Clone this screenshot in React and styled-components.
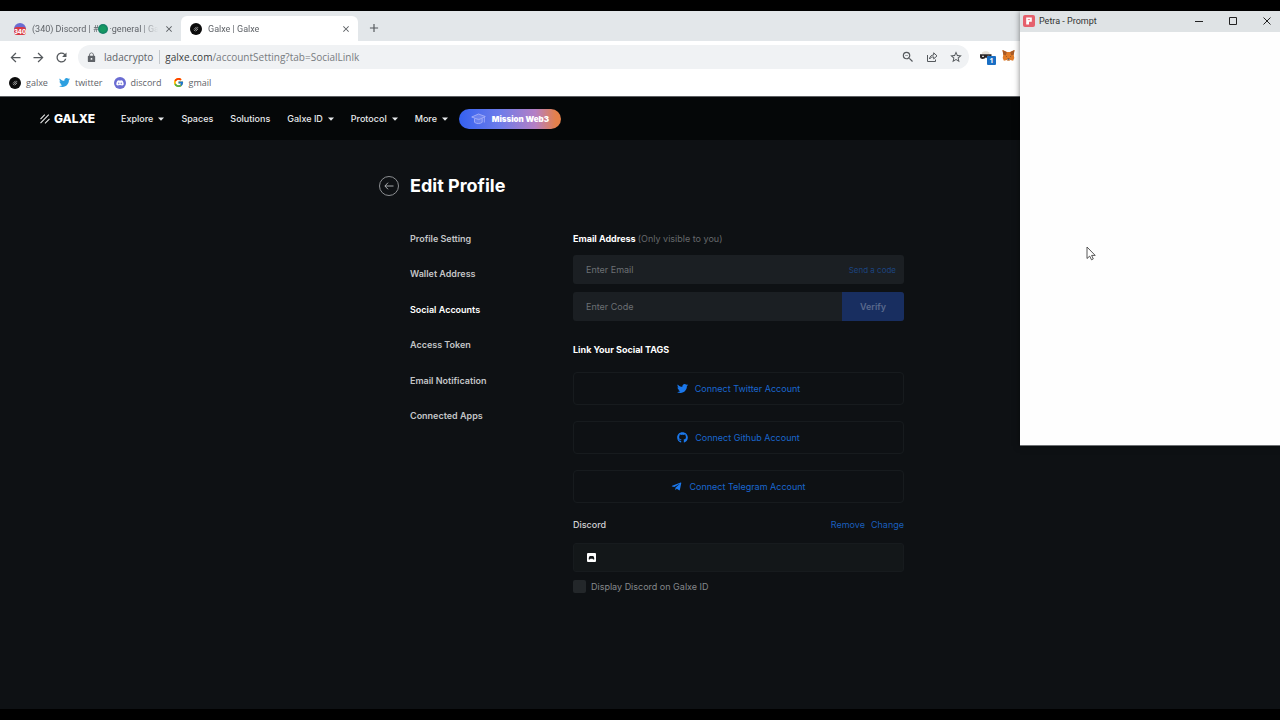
import React from 'react';
import styled, { createGlobalStyle } from 'styled-components';
import {
  MdAdd,
  MdArrowBack,
  MdArrowForward,
  MdClose,
  MdLock,
  MdRefresh,
  MdStarBorder,
  MdZoomOut,
} from 'react-icons/md';
import {
  FaDiscord,
  FaGithub,
  FaTelegramPlane,
  FaTwitter,
} from 'react-icons/fa';
import { FcGoogle } from 'react-icons/fc';

const { useState } = React;

const GlobalStyle = createGlobalStyle`
  * {
    box-sizing: border-box;
  }

  body {
    margin: 0;
    background: #000;
    font-family: Inter, 'Liberation Sans', sans-serif;
  }

  button, input {
    font-family: inherit;
    margin: 0;
    padding: 0;
    border: 0;
    background: none;
  }

  a {
    color: inherit;
    text-decoration: none;
  }

  svg {
    display: block;
    flex: none;
  }
`;

const Screen = styled.div`
  position: relative;
  display: flex;
  flex-direction: column;
  min-height: 100vh;
  padding: 11px 0;
  overflow: hidden;
`;

/* browser frame */

const Browser = styled.header`
  background: #fff;
  color: #5f6368;
  font-family: 'Open Sans', 'Noto Sans', sans-serif;
  font-size: 9px;
  line-height: 14px;
  border-bottom: 1px solid #5d6063;
`;

const TabStrip = styled.div`
  display: flex;
  align-items: flex-end;
  height: 30px;
  background: #e3e7ea;
`;

const Tab = styled.div`
  display: flex;
  align-items: center;
  gap: 6px;
  width: ${({ $active }) => ($active ? '177px' : '181px')};
  height: 25px;
  padding: 0 7px 0 ${({ $active }) => ($active ? '9px' : '14px')};
  border-radius: 6px 6px 0 0;
  background: ${({ $active }) => ($active ? '#fff' : 'none')};
`;

const TabTitle = styled.span`
  display: flex;
  align-items: center;
  flex: 1;
  min-width: 0;
  overflow: hidden;
  font-family: Roboto, 'Noto Sans', sans-serif;
  white-space: nowrap;
  mask-image: linear-gradient(to right, #000 86%, transparent);
`;

const GreenDot = styled.span`
  flex: none;
  width: 10px;
  height: 10px;
  margin-right: 1px;
  border-radius: 50%;
  background: radial-gradient(#159a62 35%, #12606a);
`;

const IconButton = styled.button`
  display: flex;
  align-items: center;
  justify-content: center;
  flex: none;
  width: ${({ $size }) => $size || 12}px;
  height: ${({ $size }) => $size || 12}px;
  color: ${({ $color }) => $color || '#55595d'};
`;

const NewTab = styled(IconButton)`
  margin: 0 0 6px 9px;
`;

const Toolbar = styled.div`
  display: flex;
  align-items: center;
  height: 32px;
  padding: 0 265px 0 8px;
`;

const NavButtons = styled.div`
  display: flex;
  gap: 8px;
  margin-right: 9px;
`;

const AddressBar = styled.div`
  display: flex;
  align-items: center;
  flex: 1;
  height: 24px;
  padding: 0 6px 0 8px;
  border-radius: 12px;
  background: #f0f2f4;
  font-size: 10px;
`;

const Site = styled.span`
  margin: 0 5px 0 7px;
  padding-right: 6px;
  border-right: 1px solid #c4c8cc;
`;

const Url = styled.span`
  flex: 1;
  color: #777b80;

  b {
    color: #3a3d41;
    font-weight: 400;
  }
`;

const BarActions = styled.div`
  display: flex;
  gap: 10px;
`;

const Extensions = styled.div`
  display: flex;
  gap: 6px;
  margin-left: 10px;
`;

const Bookmarks = styled.nav`
  display: flex;
  align-items: center;
  gap: 11px;
  height: 23px;
  padding: 0 9px 4px;
`;

const Bookmark = styled.a`
  display: flex;
  align-items: center;
  gap: 5px;
`;

/* site */

const Page = styled.div`
  flex: 1;
  background: #0e1114;
  color: #fff;
  font-size: 9px;
  line-height: 12px;
`;

const SiteNav = styled.nav`
  display: flex;
  align-items: center;
  gap: 17px;
  height: 43px;
  padding: 0 40px;
  background: #050708;
  font-weight: 500;
`;

const Logo = styled.a`
  display: flex;
  align-items: center;
  gap: 4px;
  margin-right: 9px;
  font-size: 12px;
  font-weight: 800;
`;

const NavItem = styled.button`
  display: flex;
  align-items: center;
  gap: 5px;
  color: #e8eaec;
  font-size: 9px;
  font-weight: 500;
  line-height: 12px;
  white-space: nowrap;
`;

const Mission = styled.a`
  display: flex;
  align-items: center;
  justify-content: center;
  gap: 6px;
  width: 102px;
  height: 20px;
  margin-left: -6px;
  border-radius: 10px;
  background: linear-gradient(90deg, #3561f0 0%, #6d7cea 40%, #b57fc4 75%, #e4804a 95%);
  font-size: 8px;
  font-weight: 900;
  white-space: nowrap;
`;

const Profile = styled.main`
  display: grid;
  grid-template-columns: 20px 152px 1fr;
  column-gap: 11px;
  row-gap: 35px;
  max-width: 528px;
  margin: 0 auto;
  padding: 34px 0 40px 3px;
`;

const BackButton = styled.button`
  display: flex;
  align-items: center;
  justify-content: center;
  align-self: center;
  width: 20px;
  height: 20px;
  border: 1px solid #8c8f92;
  border-radius: 50%;
  color: #b9bcbe;
`;

const Title = styled.h1`
  grid-column: 2 / 4;
  margin: 0;
  font-size: 18px;
  font-weight: 700;
  line-height: 24px;
`;

const SideMenu = styled.nav`
  grid-column: 2;
  display: flex;
  flex-direction: column;
  align-items: flex-start;
  justify-content: space-between;
  height: 189px;
`;

const SideLink = styled.a`
  color: ${({ $active }) => ($active ? '#fff' : '#c3c5c7')};
  font-weight: 600;
`;

const Form = styled.form`
  display: flex;
  flex-direction: column;
  min-width: 0;
`;

const FieldLabel = styled.label`
  margin-bottom: 10px;
  font-weight: 700;

  span {
    color: #66696c;
    font-weight: 400;
  }
`;

const Field = styled.div`
  display: flex;
  align-items: center;
  height: 29px;
  margin-bottom: 8px;
  border-radius: 3px;
  background: #1b1f23;
  overflow: hidden;
`;

const TextInput = styled.input`
  flex: 1;
  min-width: 0;
  height: 100%;
  padding-left: 13px;
  color: #fff;
  font-size: 9px;
  outline: none;

  &::placeholder {
    color: #6c7074;
    opacity: 1;
  }
`;

const SendCode = styled.button`
  margin-right: 8px;
  color: #1c437f;
  font-size: 8px;
  font-weight: 400;
`;

const Verify = styled.button`
  width: 62px;
  height: 100%;
  background: #182e60;
  color: #59698c;
  font-size: 9px;
  font-weight: 600;
`;

const Heading = styled.h2`
  margin: 15px 0 16px;
  font-size: 9px;
  font-weight: 700;
  line-height: 12px;
`;

const ConnectList = styled.div`
  display: flex;
  flex-direction: column;
  gap: 16px;
`;

const ConnectButton = styled.button`
  display: flex;
  align-items: center;
  justify-content: center;
  gap: 7px;
  height: 33px;
  border: 1px solid #171b1e;
  border-radius: 4px;
  color: #1a67cf;
  font-size: 9px;

  svg {
    color: #1b78ec;
  }
`;

const AccountRow = styled.div`
  display: flex;
  gap: 6px;
  margin: 16px 0 12px;
  color: #d0d2d4;
  font-weight: 500;

  span {
    flex: 1;
  }
`;

const AccountLink = styled.a`
  color: #1a5fbd;
  font-weight: 400;
`;

const AccountBox = styled.div`
  display: flex;
  align-items: center;
  height: 29px;
  padding-left: 13px;
  border: 1px solid #171b1e;
  border-radius: 3px;
  background: #131719;
`;

const CheckLabel = styled.label`
  display: flex;
  align-items: center;
  gap: 5px;
  margin-top: 8px;
  color: #85888b;
`;

const Checkbox = styled.input`
  appearance: none;
  width: 13px;
  height: 13px;
  border-radius: 2px;
  background: ${({ checked }) => (checked ? '#1a67cf' : '#23272a')};
`;

/* wallet popup */

const PopupWindow = styled.aside`
  position: absolute;
  top: 11px;
  right: 0;
  width: 260px;
  height: 435px;
  border-bottom: 1px solid #6d7073;
  background: #fefefe;
  color: #333;
  box-shadow: 0 0 6px rgba(0, 0, 0, 0.5);
`;

const PopupBar = styled.div`
  display: flex;
  align-items: center;
  gap: 4px;
  height: 21px;
  padding: 0 5px 2px 3px;
  background: #dfe3e5;
  font-family: Roboto, 'Noto Sans', sans-serif;
  font-size: 9px;
  line-height: 12px;

  span {
    flex: 1;
  }
`;

const WindowButtons = styled.div`
  display: flex;
  gap: 18px;
`;

const Pointer = styled.svg`
  position: absolute;
  left: 66px;
  top: 235px;
`;

const GalxeBadge = () => (
  <svg width="12" height="12" viewBox="0 0 12 12">
    <circle cx="6" cy="6" r="6" fill="#0b0b0b" />
    <path d="M4 6.4L6.6 3.8M4.2 8L8 4.2M5.7 8.2L8.1 5.8" stroke="#ddd" strokeWidth="0.7" />
  </svg>
);

const DiscordBadge = ({ count }) => (
  <svg width="12" height="12" viewBox="0 0 12 12">
    <circle cx="6" cy="6" r="6" fill="#6a6cd2" />
    {count ? (
      <>
        <rect x="0" y="4" width="12" height="8" rx="3" fill="#d83a45" />
        <text x="6" y="10.5" textAnchor="middle" fontFamily="Inter" fontSize="6" fontWeight="800" fill="#fff">
          {count}
        </text>
      </>
    ) : (
      <FaDiscord x="2" y="2" size={8} color="#fff" />
    )}
  </svg>
);

const ShareIcon = () => (
  <svg width="14" height="14" viewBox="0 0 14 14" fill="none" stroke="currentColor" strokeLinejoin="round">
    <path d="M2.500 5v6.500h8v-2" />
    <path d="M4.500 9c.3-2.500 1.800-4 4.200-4V2.800L12 5.900 8.700 8.900V6.900c-1.900 0-3.200.6-4.200 2.100z" />
  </svg>
);

const IncognitoIcon = () => (
  <svg width="17" height="17" viewBox="0 0 17 17">
    <path d="M3 3.500c2-1.700 5.500-1.700 7.500 0V5H3z" fill="#e9e3da" />
    <path d="M1 5.200h11.500v2.600c0 1.500-1 2.200-2.400 2.200S7.700 9.300 7 8.300C6.300 9.300 5 10 3.600 10S1 9.300 1 7.800z" fill="#292426" />
    <path d="M3 7.300h2M8.500 7.300h2" stroke="#fff" />
    <rect x="8" y="7" width="9" height="9" rx="1" fill="#1a6fc4" />
    <text x="12.500" y="14" textAnchor="middle" fontFamily="Open Sans" fontSize="7" fontWeight="700" fill="#fff">1</text>
  </svg>
);

const FoxIcon = () => (
  <svg width="13" height="13" viewBox="0 0 13 13">
    <path d="M.5 1l4.300 2h3.400l4.300-2-.8 4.700.6 3.300-1.200 2.800-2.900-.7-1 .9H5.800l-1-.9-2.900.7L.7 9l.6-3.300z" fill="#e17b27" />
    <path d="M.5 1l4.300 2-.9 3.200-2.600-.5zM12.500 1L8.200 3l.9 3.200 2.600-.5z" fill="#a85a26" />
    <path d="M3.500 6.700l1.500.7-.2.700zM9.500 6.700L8 7.400l.2.700z" fill="#2b2b33" />
    <path d="M5.300 10h2.400l.4 1.500H4.900z" fill="#c9b4a2" />
    <path d="M5.600 9.600h1.800v.9H5.600z" fill="#2b2b33" />
  </svg>
);

const GalxeMark = () => (
  <svg width="10" height="10" viewBox="0 0 10 10" stroke="#e8e8e8" strokeWidth="1.100">
    <path d="M.5 5.200L4.800.7M.5 9.200L8.800.7M5 9.300l4.500-4.500" />
  </svg>
);

const CaretDown = () => (
  <svg width="6" height="4" viewBox="0 0 6 4">
    <path d="M0 .5h6L3 3.700z" fill="#e8eaec" />
  </svg>
);

const CapIcon = () => (
  <svg width="15" height="12" viewBox="0 0 15 12" fill="#98a3f3" fillOpacity="0.4" stroke="#aeb6fa" strokeWidth="0.8" strokeLinejoin="round">
    <path d="M.7 4L7.500 1l6.800 2.500-6.500 3.200z" />
    <path d="M3.500 5.500v3.800c2 1.700 5.500 1.700 7.700 0V5.200" />
    <path d="M13.300 4v5.500" />
  </svg>
);

const DiscordTile = () => (
  <svg width="9" height="9" viewBox="0 0 9 9">
    <rect width="9" height="9" rx="1" fill="#fff" />
    <path d="M1.700 6.300c0-2 .6-3.200 1.300-3.400h3c.7.2 1.300 1.400 1.300 3.400-.8.500-1.500.2-1.700-.5H3.400c-.2.700-.9 1-1.700.5z" fill="#131719" />
  </svg>
);

const PetraLogo = () => (
  <svg width="12" height="12" viewBox="0 0 12 12">
    <rect width="12" height="12" rx="2" fill="#e5606c" />
    <path d="M3.200 2.500h5.600v4.300H6V9.500H3.200z" fill="#fff" />
    <path d="M4.800 4.600h2.300" stroke="#e5606c" strokeWidth="0.800" />
  </svg>
);

const navItems = [
  { name: 'Explore', menu: true },
  { name: 'Spaces' },
  { name: 'Solutions' },
  { name: 'Galxe ID', menu: true },
  { name: 'Protocol', menu: true },
  { name: 'More', menu: true },
];

const sideLinks = [
  'Profile Setting',
  'Wallet Address',
  'Social Accounts',
  'Access Token',
  'Email Notification',
  'Connected Apps',
];

const accounts = [
  { name: 'Twitter', Icon: FaTwitter },
  { name: 'Github', Icon: FaGithub },
  { name: 'Telegram', Icon: FaTelegramPlane },
];

const bookmarks = [
  { name: 'galxe', icon: <GalxeBadge /> },
  { name: 'twitter', icon: <FaTwitter size={11} color="#2c9fe0" /> },
  { name: 'discord', icon: <DiscordBadge /> },
  { name: 'gmail', icon: <FcGoogle size={11} /> },
];

function BrowserFrame() {
  return (
    <Browser>
      <TabStrip>
        <Tab>
          <DiscordBadge count="340" />
          <TabTitle>
            (340) Discord | #
            <GreenDot />
            ·general | Ga
          </TabTitle>
          <IconButton $size={10} aria-label="Close tab"><MdClose size={10} /></IconButton>
        </Tab>
        <Tab $active>
          <GalxeBadge />
          <TabTitle>Galxe | Galxe</TabTitle>
          <IconButton $size={10} aria-label="Close tab"><MdClose size={10} /></IconButton>
        </Tab>
        <NewTab $size={14} aria-label="New tab"><MdAdd size={14} /></NewTab>
      </TabStrip>
      <Toolbar>
        <NavButtons>
          <IconButton $size={15} aria-label="Back"><MdArrowBack size={15} /></IconButton>
          <IconButton $size={15} aria-label="Forward"><MdArrowForward size={15} /></IconButton>
          <IconButton $size={15} aria-label="Reload"><MdRefresh size={15} /></IconButton>
        </NavButtons>
        <AddressBar>
          <MdLock size={11} />
          <Site>ladacrypto</Site>
          <Url>
            <b>galxe.com</b>
            /accountSetting?tab=SocialLinlk
          </Url>
          <BarActions>
            <IconButton $size={14} aria-label="Zoom"><MdZoomOut size={14} /></IconButton>
            <IconButton $size={14} aria-label="Share"><ShareIcon /></IconButton>
            <IconButton $size={14} aria-label="Bookmark"><MdStarBorder size={14} /></IconButton>
          </BarActions>
        </AddressBar>
        <Extensions>
          <IncognitoIcon />
          <FoxIcon />
        </Extensions>
      </Toolbar>
      <Bookmarks>
        {bookmarks.map(({ name, icon }) => (
          <Bookmark key={name} href="#">
            {icon}
            {name}
          </Bookmark>
        ))}
      </Bookmarks>
    </Browser>
  );
}

function SocialForm() {
  const [email, setEmail] = useState('');
  const [code, setCode] = useState('');
  const [isShown, setIsShown] = useState(false);

  return (
    <Form onSubmit={(e) => e.preventDefault()}>
      <FieldLabel htmlFor="email">
        Email Address
        {' '}
        <span>(Only visible to you)</span>
      </FieldLabel>
      <Field>
        <TextInput
          id="email"
          placeholder="Enter Email"
          value={email}
          onChange={(e) => setEmail(e.target.value)}
        />
        <SendCode type="button">Send a code</SendCode>
      </Field>
      <Field>
        <TextInput
          aria-label="Code"
          placeholder="Enter Code"
          value={code}
          onChange={(e) => setCode(e.target.value)}
        />
        <Verify type="submit">Verify</Verify>
      </Field>
      <Heading>Link Your Social TAGS</Heading>
      <ConnectList>
        {accounts.map(({ name, Icon }) => (
          <ConnectButton key={name} type="button">
            <Icon size={11} />
            {`Connect ${name} Account`}
          </ConnectButton>
        ))}
      </ConnectList>
      <AccountRow>
        <span>Discord</span>
        <AccountLink href="#">Remove</AccountLink>
        <AccountLink href="#">Change</AccountLink>
      </AccountRow>
      <AccountBox>
        <DiscordTile />
      </AccountBox>
      <CheckLabel>
        <Checkbox
          type="checkbox"
          checked={isShown}
          onChange={() => setIsShown((prev) => !prev)}
        />
        Display Discord on Galxe ID
      </CheckLabel>
    </Form>
  );
}

function WalletPopup() {
  return (
    <PopupWindow>
      <PopupBar>
        <PetraLogo />
        <span>Petra - Prompt</span>
        <WindowButtons>
          <IconButton $size={16} $color="#222" aria-label="Minimize">
            <svg width="8" height="8" viewBox="0 0 8 8"><path d="M0 4.500h8" stroke="currentColor" /></svg>
          </IconButton>
          <IconButton $size={16} $color="#222" aria-label="Maximize">
            <svg width="8" height="8" viewBox="0 0 8 8" fill="none"><path d="M.5.5h7v7h-7z" stroke="currentColor" /></svg>
          </IconButton>
          <IconButton $size={16} $color="#222" aria-label="Close">
            <svg width="8" height="8" viewBox="0 0 8 8"><path d="M.5.5l7 7M7.500.5l-7 7" stroke="currentColor" /></svg>
          </IconButton>
        </WindowButtons>
      </PopupBar>
      <Pointer width="11" height="15" viewBox="0 0 11 15">
        <path
          d="M1 1v11.500l2.700-2.400 1.800 3.700 1.800-.9-1.700-3.500h3.600z"
          fill="#fff"
          stroke="#444"
          strokeWidth="0.900"
        />
      </Pointer>
    </PopupWindow>
  );
}

function App() {
  return (
    <Screen>
      <GlobalStyle />
      <BrowserFrame />
      <Page>
        <SiteNav>
          <Logo href="#">
            <GalxeMark />
            GALXE
          </Logo>
          {navItems.map(({ name, menu }) => (
            <NavItem key={name}>
              {name}
              {menu && <CaretDown />}
            </NavItem>
          ))}
          <Mission href="#">
            <CapIcon />
            Mission Web3
          </Mission>
        </SiteNav>
        <Profile>
          <BackButton aria-label="Back">
            <svg width="10" height="8" viewBox="0 0 10 8" fill="none" stroke="currentColor" strokeWidth="0.900">
              <path d="M4 .7L.9 4 4 7.300M.9 4h8.600" />
            </svg>
          </BackButton>
          <Title>Edit Profile</Title>
          <SideMenu>
            {sideLinks.map((name) => (
              <SideLink key={name} href="#" $active={name === 'Social Accounts'}>
                {name}
              </SideLink>
            ))}
          </SideMenu>
          <SocialForm />
        </Profile>
      </Page>
      <WalletPopup />
    </Screen>
  );
}

export default App;
